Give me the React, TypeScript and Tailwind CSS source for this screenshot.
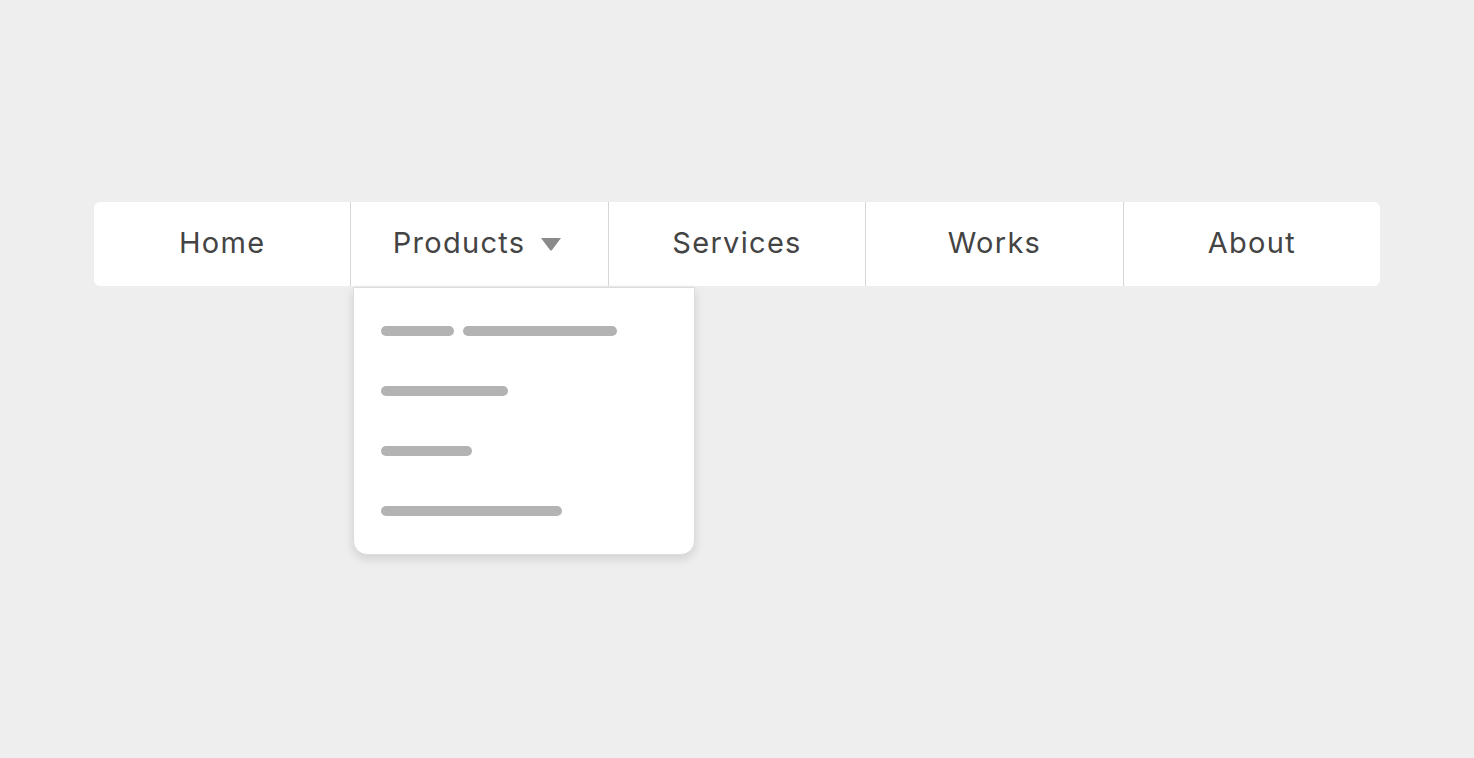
import React from "react";

const items = ["Home", "Products", "Services", "Works", "About"];

export default function App() {
  return (
    <div className="min-h-[758px] w-full bg-[#eeeeee] pt-[202px]" style={{ fontFamily: 'Inter, "Noto Sans", sans-serif' }}>
      <nav className="relative mx-auto flex h-[84px] w-[1286px] rounded-[6px] bg-white">
        {items.map((label, i) => (
          <div
            key={label}
            className={`relative flex flex-1 items-center justify-center text-[29px] tracking-[1.3px] text-[#444444] ${i > 0 ? "border-l-[1.5px] border-[#d6d6d6]" : ""}`}
          >
            <div className={`mb-[3px] flex items-center ${label === "Products" ? "mr-[5px]" : ""}`}>
              <span className="leading-none">{label}</span>
              {label === "Products" && (
                <svg className="ml-[16px] mt-[3px]" width="20" height="13" viewBox="0 0 20 13">
                  <path d="M0 0 H20 L11 12 Q10 13 9 12 Z" fill="#8a8a8a" />
                </svg>
              )}
            </div>
            {label === "Products" && (
              <div className="absolute left-[2px] top-[85px] flex h-[268px] w-[342px] flex-col gap-[50px] rounded-b-[14px] border-[1.5px] border-[#dcdcdc] bg-white pl-[27px] pt-[38px] shadow-[0_4px_10px_rgba(0,0,0,0.12)]">
                <div className="flex gap-[9px]">
                  <div className="h-[10px] w-[73px] rounded-full bg-[#b3b3b3]" />
                  <div className="h-[10px] w-[154px] rounded-full bg-[#b3b3b3]" />
                </div>
                <div className="h-[10px] w-[127px] rounded-full bg-[#b3b3b3]" />
                <div className="h-[10px] w-[91px] rounded-full bg-[#b3b3b3]" />
                <div className="h-[10px] w-[181px] rounded-full bg-[#b3b3b3]" />
              </div>
            )}
          </div>
        ))}
      </nav>
    </div>
  );
}
